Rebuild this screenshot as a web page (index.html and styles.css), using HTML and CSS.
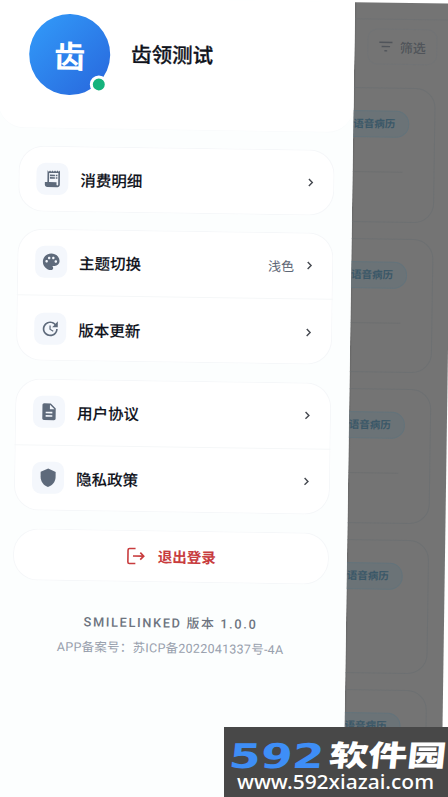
FILE: index.html
```html
<!DOCTYPE html>
<html lang="zh-CN">
<head>
<meta charset="utf-8">
<title>齿领测试</title>
<link rel="stylesheet" href="styles.css">
</head>
<body>
<div class="phone">
  <aside class="drawer">
    <header class="profile">
      <div class="avatar">齿<span class="status"></span></div>
      <h1 class="name">齿领测试</h1>
    </header>
    <nav class="menu">
      <section class="card">
        <div class="row">
          <span class="tile"><svg viewBox="0 0 24 24"><path fill-rule="evenodd" d="M19.5 3.5L18 2l-1.500 1.500L15 2l-1.500 1.500L12 2l-1.500 1.500L9 2 7.500 3.500 6 2v14H3v3c0 1.660 1.340 3 3 3h12c1.660 0 3-1.340 3-3V2l-1.500 1.500zM19 19c0 .55-.45 1-1 1s-1-.45-1-1v-3H8V5h11v14zM9 7h6v2H9zM16 7h2v2h-2zM9 10h6v2H9zM16 10h2v2h-2z"/></svg></span>
          <span class="label">消费明细</span>
          <svg class="chevron" viewBox="0 0 10 10"><path d="M3.500 1.600L6.900 5 3.500 8.400"/></svg>
        </div>
      </section>
      <section class="card">
        <div class="row">
          <span class="tile"><svg viewBox="0 0 24 24"><path d="M12 2C6.490 2 2 6.490 2 12s4.490 10 10 10c1.380 0 2.500-1.120 2.500-2.500 0-.61-.23-1.200-.64-1.670-.08-.1-.13-.21-.13-.33 0-.28.22-.5.5-.5H16c3.310 0 6-2.690 6-6C22 6.040 17.510 2 12 2zM6.500 13C5.670 13 5 12.330 5 11.500S5.670 10 6.500 10 8 10.670 8 11.500 7.330 13 6.500 13zM9.500 9C8.670 9 8 8.330 8 7.500S8.670 6 9.500 6s1.500.67 1.500 1.500S10.330 9 9.500 9zM14.500 9C13.670 9 13 8.330 13 7.500S13.670 6 14.500 6s1.500.67 1.500 1.500S15.330 9 14.500 9zM17.500 13c-.83 0-1.500-.67-1.500-1.500s.67-1.500 1.500-1.500 1.500.67 1.500 1.500-.67 1.500-1.500 1.500z"/></svg></span>
          <span class="label">主题切换</span>
          <span class="value">浅色</span>
          <svg class="chevron" viewBox="0 0 10 10"><path d="M3.500 1.600L6.900 5 3.500 8.400"/></svg>
        </div>
        <div class="row">
          <span class="tile"><svg viewBox="0 0 24 24"><path d="M21 10.120h-6.780l2.740-2.820c-2.730-2.700-7.150-2.800-9.880-.1-2.730 2.710-2.730 7.080 0 9.790s7.150 2.710 9.880 0C18.320 15.650 19 14.080 19 12.100h2c0 1.980-.88 4.550-2.640 6.290-3.510 3.480-9.210 3.480-12.720 0-3.500-3.470-3.530-9.110-.02-12.580s9.140-3.470 12.650 0L21 3v7.120zM12.500 8v4.250l3.500 2.080-.72 1.210L11 13V8h1.500z"/></svg></span>
          <span class="label">版本更新</span>
          <svg class="chevron" viewBox="0 0 10 10"><path d="M3.500 1.600L6.900 5 3.500 8.400"/></svg>
        </div>
      </section>
      <section class="card">
        <div class="row">
          <span class="tile"><svg viewBox="0 0 24 24"><path d="M14 2H6c-1.100 0-1.990.9-1.990 2L4 20c0 1.100.89 2 1.990 2H18c1.100 0 2-.9 2-2V8l-6-6zm2 16H8v-2h8v2zm0-4H8v-2h8v2zm-3-5V3.500L18.500 9H13z"/></svg></span>
          <span class="label">用户协议</span>
          <svg class="chevron" viewBox="0 0 10 10"><path d="M3.500 1.600L6.900 5 3.500 8.400"/></svg>
        </div>
        <div class="row">
          <span class="tile"><svg viewBox="0 0 24 24"><path d="M12 1L3 5v6c0 5.550 3.840 10.740 9 12 5.160-1.260 9-6.450 9-12V5l-9-4z"/></svg></span>
          <span class="label">隐私政策</span>
          <svg class="chevron" viewBox="0 0 10 10"><path d="M3.500 1.600L6.900 5 3.500 8.400"/></svg>
        </div>
      </section>
      <section class="card logout">
        <svg viewBox="0 0 20 18"><path d="M9.500 1.500H3.500Q2 1.500 2 3v12q0 1.500 1.500 1.500h6M7 9h10.500M14.300 5.500L17.800 9l-3.500 3.500"/></svg>
        <span>退出登录</span>
      </section>
    </nav>
    <footer class="about">
      <p class="version">SMILELINKED 版本 1.0.0</p>
      <p class="record">APP备案号：苏ICP备2022041337号-4A</p>
    </footer>
  </aside>
  <main class="page">
    <div class="toolbar">
      <div class="filter"><svg viewBox="0 0 16 12"><path d="M1 1.500h14M3.500 6h9M6.500 10.500h3"/></svg>筛选</div>
    </div>
    <div class="records">
      <article class="record-card"><span class="badge">语音病历</span><hr></article>
      <article class="record-card"><span class="badge">语音病历</span><hr></article>
      <article class="record-card"><span class="badge">语音病历</span><hr></article>
      <article class="record-card"><span class="badge">语音病历</span><hr class="blank"></article>
      <article class="record-card"><span class="badge">语音病历</span><hr></article>
    </div>
  </main>
</div>
<div class="watermark">
  <svg viewBox="0 0 224 70">
    <g transform="translate(0 41) skewX(-6)">
      <text class="digits" x="4" y="0" textLength="95" lengthAdjust="spacingAndGlyphs">592</text>
      <text class="site" x="104" y="-2" textLength="117" lengthAdjust="spacingAndGlyphs">软件园</text>
    </g>
    <text class="url" x="13" y="62" textLength="197" lengthAdjust="spacingAndGlyphs">www.592xiazai.com</text>
  </svg>
</div>
</body>
</html>
```
FILE: styles.css
```css
* { box-sizing: border-box; }

body {
  margin: 0;
  width: 448px;
  height: 797px;
  overflow: hidden;
  background: #fff;
  font-family: Roboto, "Noto Sans CJK SC", sans-serif;
  position: relative;
}

/* The screen is tilted slightly clockwise. */
.phone {
  display: flex;
  width: 453px;
  height: 830px;
  margin-top: -3px;
  transform: rotate(0.83deg);
  transform-origin: 0 3px;
}

.drawer {
  flex: 0 0 355px;
  background: #fcfefe;
  z-index: 1;
}

.profile {
  display: flex;
  align-items: center;
  gap: 21px;
  height: 131px;
  padding: 0 0 17px 30px;
  background: #fff;
  border-bottom: 1px solid #f9fbfc;
  border-radius: 0 0 26px 26px;
}

.avatar {
  position: relative;
  display: flex;
  align-items: center;
  justify-content: center;
  width: 81px;
  height: 81px;
  border-radius: 50%;
  background: linear-gradient(135deg, #329cfa, #2866dc);
  color: #fff;
  font: 700 31px/1 "Noto Sans CJK SC", sans-serif;
}

.status {
  position: absolute;
  right: 2px;
  bottom: 2px;
  width: 18px;
  height: 18px;
  border: 3px solid #fff;
  border-radius: 50%;
  background: #15b37c;
}

.name {
  margin: 0 0 4px;
  color: #10131c;
  font: 500 20.5px/1 "Noto Sans CJK SC", sans-serif;
  -webkit-text-stroke: 0.3px;
}

.menu {
  display: flex;
  flex-direction: column;
  gap: 17.300px;
  padding: 17px 18px 0 21px;
}

.card {
  background: #fff;
  border-radius: 25px;
  box-shadow: inset 0 0 0 1px #f5f7f9;
}

.row {
  display: flex;
  align-items: center;
  height: 66px;
  padding: 0 19px 0 18px;
}

.row + .row { border-top: 1px solid #f5f7f8; }

.tile {
  display: flex;
  align-items: center;
  justify-content: center;
  width: 32px;
  height: 32px;
  margin-right: 12px;
  border-radius: 9px;
  background: #f4f7fc;
}

.tile svg {
  width: 20px;
  height: 20px;
  fill: #5e6a7b;
}

.label {
  flex: 1;
  color: #10131c;
  font-size: 15.5px;
  font-weight: 500;
  -webkit-text-stroke: 0.1px;
}

.value {
  margin-right: 10px;
  color: #5d6675;
  font-size: 13px;
}

.chevron {
  width: 10px;
  height: 10px;
  fill: none;
  stroke: #454950;
  stroke-width: 1.4;
}

.logout {
  display: flex;
  align-items: center;
  justify-content: center;
  gap: 12px;
  height: 52px;
  margin-top: 1px;
  color: #c83c3e;
  font-size: 14.5px;
  font-weight: 700;
}

.logout svg {
  width: 20px;
  height: 18px;
  fill: none;
  stroke: currentColor;
  stroke-width: 1.6;
}

.about {
  padding-left: 4px;
  text-align: center;
}

.about p { margin: 0; }

.about .version {
  margin-top: 31px;
  color: #6d7480;
  font-size: 12.8px;
  font-weight: 500;
  line-height: 20px;
  letter-spacing: 1.65px;
}

.about .record {
  margin-top: 5px;
  color: #98a0ad;
  font-size: 12.5px;
  line-height: 20px;
  letter-spacing: 0.26px;
}

.page {
  flex: 1;
  overflow: hidden;
  background: linear-gradient(90deg, #666, #747474 2px);
}

.toolbar {
  display: flex;
  justify-content: flex-end;
  height: 69px;
  margin-top: 16px;
  padding: 9px 15px 0 0;
  border-top: 1px solid #6f7173;
}

.filter {
  display: flex;
  align-items: center;
  justify-content: center;
  gap: 6px;
  width: 70px;
  height: 36px;
  border: 1px solid #717375;
  border-radius: 10px;
  color: #50545a;
  font-size: 13px;
  font-weight: 500;
}

.filter svg {
  width: 15px;
  height: 12px;
  fill: none;
  stroke: currentColor;
  stroke-width: 1.5;
}

.records {
  display: flex;
  flex-direction: column;
  gap: 16px;
  margin-left: -40px;
  padding-right: 16px;
}

.record-card {
  flex: 0 0 134.600px;
  padding: 22px 25px 0 0;
  border: 1px solid #6d7072;
  border-radius: 20px;
}

.badge {
  display: block;
  width: 74px;
  height: 27px;
  margin-left: auto;
  padding-right: 13px;
  border: 1px solid #63737b;
  border-radius: 10px 13px 13px 10px;
  background: #6b7377;
  color: #3b5868;
  font-size: 10.5px;
  font-weight: 700;
  line-height: 25px;
  text-align: right;
  white-space: nowrap;
}

.record-card hr {
  margin: 34px 6px 0 0;
  border: 0;
  border-top: 1px solid #6d6f70;
}

.record-card .blank { border-color: transparent; }

.watermark {
  position: absolute;
  right: 0;
  bottom: 0;
  z-index: 2;
  width: 224px;
  height: 70px;
  background: #484848;
}

.watermark svg {
  display: block;
  width: 224px;
  height: 70px;
}

.digits {
  fill: #3e8ef7;
  font: 700 34px "DejaVu Sans", sans-serif;
}

.site {
  fill: #fff;
  font: 900 29px "Noto Sans CJK SC", sans-serif;
}

.url {
  fill: #fff;
  font: 500 20px "Noto Sans", sans-serif;
}
```
